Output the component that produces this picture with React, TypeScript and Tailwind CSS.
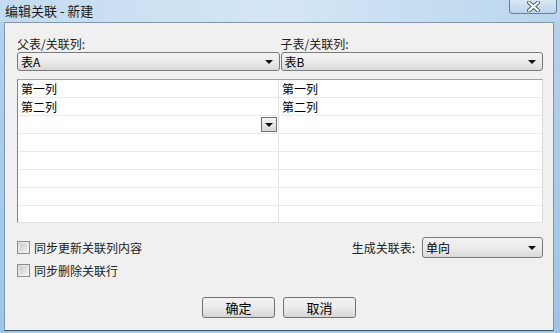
export default function App() {
  const rows = [
    ["第一列", "第一列"],
    ["第二列", "第二列"],
    ["", ""],
    ["", ""],
    ["", ""],
    ["", ""],
    ["", ""],
    ["", ""],
  ]

  const font = { fontFamily: '"Noto Sans CJK SC", "Noto Sans", sans-serif' }

  return (
    <div
      className="w-[560px] h-[333px] flex flex-col bg-gradient-to-b from-[#b4d2ec] to-[#9ec5e6] text-[12px] text-black overflow-hidden"
      style={font}
    >
      {/* title bar */}
      <div className="h-[22px] shrink-0 flex items-start justify-between bg-gradient-to-r from-[#c3dbef] via-[#d4e6f5] to-[#b9d6ee]">
        <div className="pl-[5px] pt-[2px] text-[13px] leading-[18px] text-[#1b1b1b]">编辑关联 - 新建</div>
        <div className="mr-[3px] w-[48px] h-[14px] rounded-b-[4px] border border-t-0 border-[#6d7f93] bg-gradient-to-b from-[#d9e8f5] to-[#bcd5ea] flex items-center justify-center">
          <svg width="13" height="11" viewBox="0 0 13 11">
            <path
              d="M2 1.5 L11 9.5 M11 1.5 L2 9.5"
              stroke="#4a5a6c"
              strokeWidth="4"
              strokeLinecap="round"
            />
            <path
              d="M2 1.5 L11 9.5 M11 1.5 L2 9.5"
              stroke="#ffffff"
              strokeWidth="2.2"
              strokeLinecap="round"
            />
          </svg>
        </div>
      </div>

      {/* client area */}
      <div className="flex-1 ml-[4px] mr-[6px] mb-[2px] border border-[#8596a9] border-b-[#3f5266] bg-[#f0f0f0] flex flex-col pl-[12px] pr-[10px] pt-[12px]">
        {/* table pickers */}
        <div className="grid grid-cols-2 gap-x-[1px]">
          <div className="leading-[17px] text-[#222]">父表/关联列:</div>
          <div className="leading-[17px] text-[#222]">子表/关联列:</div>
          <Combo value="表A" />
          <Combo value="表B" />
        </div>

        {/* mapping grid */}
        <div className="mt-[8px] border border-[#a3a3a3] border-l-[#828282] border-r-[#dcdcdc] border-b-[#e2e2e2] bg-white">
          {rows.map((r, i) => (
            <div key={i} className="flex h-[18px] last:h-[16px] border-b border-[#ebebeb] last:border-b-0">
              <div className="w-[261px] border-r border-[#e4e4e4] pl-[3px] leading-[17px] flex items-center justify-between pr-[1px]">
                <span>{r[0]}</span>
                {i === 2 && (
                  <span className="w-[16px] h-[15px] border border-[#707070] bg-gradient-to-b from-[#f6f6f6] to-[#d8d8d8] flex items-center justify-center">
                    <Arrow />
                  </span>
                )}
              </div>
              <div className="flex-1 pl-[3px] leading-[17px]">{r[1]}</div>
            </div>
          ))}
        </div>

        {/* options */}
        <div className="mt-[14px] flex items-center justify-between h-[21px]">
          <Check label="同步更新关联列内容" />
          <div className="flex items-center gap-[7px]">
            <span className="text-[#222]">生成关联表:</span>
            <div className="w-[121px]">
              <Combo value="单向" tall />
            </div>
          </div>
        </div>
        <div className="mt-[2px] h-[21px] flex items-center">
          <Check label="同步删除关联行" />
        </div>

        {/* buttons */}
        <div className="mt-[16px] flex justify-center gap-[8px] pr-[2px]">
          <Button label="确定" />
          <Button label="取消" />
        </div>
      </div>
    </div>
  )
}

function Arrow() {
  return (
    <svg width="8" height="4" viewBox="0 0 8 4">
      <path d="M0 0 H8 L4 4 Z" fill="#111" />
    </svg>
  )
}

function Combo({ value, tall }: { value: string; tall?: boolean }) {
  return (
    <div
      className={`${tall ? "h-[21px]" : "h-[19px]"} rounded-[3px] border border-[#7a7a7a] bg-gradient-to-b from-[#f3f3f3] via-[#ebebeb] to-[#d9d9d9] flex items-center justify-between pl-[3px] pr-[6px]`}
    >
      <span className="leading-[16px]">{value}</span>
      <Arrow />
    </div>
  )
}

function Check({ label }: { label: string }) {
  return (
    <div className="flex items-center gap-[4px]">
      <span className="w-[13px] h-[13px] border border-[#8e8f8f] bg-gradient-to-br from-[#d8d8d8] to-[#f6f6f6] p-[2px]">
        <span className="block w-full h-full bg-gradient-to-br from-[#cbcbcb] to-[#eeeeee]" />
      </span>
      <span className="leading-[16px] text-[#222]">{label}</span>
    </div>
  )
}

function Button({ label }: { label: string }) {
  return (
    <div className="w-[73px] h-[21px] rounded-[3px] border border-[#707070] bg-gradient-to-b from-[#f2f2f2] via-[#ebebeb] to-[#d6d6d6] flex items-center justify-center leading-[16px] text-[13px]">
      {label}
    </div>
  )
}
